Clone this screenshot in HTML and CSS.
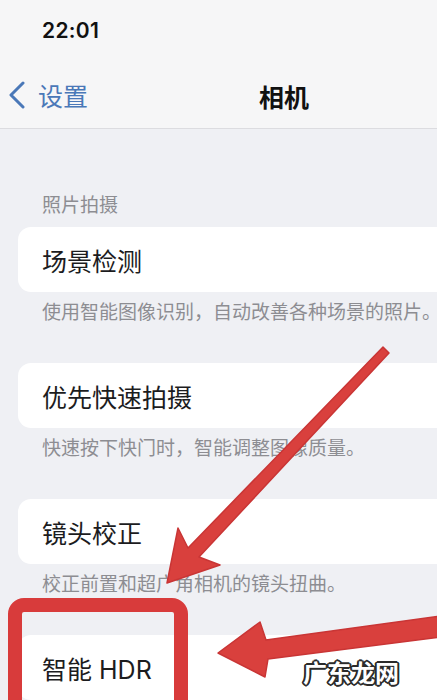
FILE: index.html
```html
<!DOCTYPE html>
<html>
<head>
  <meta charset="utf-8">
  <title>相机</title>
  <link rel="stylesheet" href="styles.css">
</head>
<body>
  <div class="screen">
    <!-- Status bar -->
    <div class="status"><span class="time">22:01</span></div>

    <!-- Navigation bar -->
    <div class="nav">
      <a class="back">
        <svg class="chev" width="18" height="28" viewBox="0 0 18 28"><path d="M15 2 L3 14 L15 26" /></svg>
        <span>设置</span>
      </a>
      <h1 class="title">相机</h1>
    </div>

    <!-- Settings list -->
    <div class="list">
      <div class="section-head">照片拍摄</div>
      <div class="item">
        <div class="card">场景检测</div>
        <p class="desc">使用智能图像识别，自动改善各种场景的照片。</p>
      </div>
      <div class="item">
        <div class="card">优先快速拍摄</div>
        <p class="desc">快速按下快门时，智能调整图像质量。</p>
      </div>
      <div class="item">
        <div class="card">镜头校正</div>
        <p class="desc">校正前置和超广角相机的镜头扭曲。</p>
      </div>
      <div class="item">
        <div class="card">智能 HDR</div>
      </div>
    </div>

    <!-- Red annotation marks drawn over the screenshot -->
    <svg class="marks" width="437" height="700" viewBox="0 0 437 700">
      <rect class="box" x="15" y="605" width="166" height="130" rx="9" />
      <polygon class="arrow" points="383,347 389,353 199,557 220,565 167,583 178,528 188,548" />
      <polygon class="arrow" points="440,616 440,637 268,659 265,677 218,653 260,622 266,640" />
    </svg>
    <div class="watermark">广东龙网</div>
  </div>
</body>
</html>
```

FILE: styles.css
```css
/* Page basics */
body { margin: 0; font-family: Inter, "Noto Sans CJK SC", sans-serif; background: #eff0f4; }
.screen { position: relative; width: 437px; height: 700px; overflow: hidden; }

/* Status and navigation bars */
.status { height: 60px; background: #f6f6f7; box-sizing: border-box; padding: 20px 0 0 42px; }
.time { font-size: 21px; font-weight: 600; line-height: 22px; color: #111; letter-spacing: 0.3px; }
.nav { height: 68px; background: #f6f6f7; border-bottom: 1px solid #dcdce0; display: flex; align-items: center; }
.back { display: flex; align-items: center; color: #4a78b8; font-size: 25px; margin-top: 2px; }
.chev { margin: 0 12px 0 8px; }
.chev path { fill: none; stroke: #4a78b8; stroke-width: 3; stroke-linecap: round; stroke-linejoin: round; }
.title { margin: 4px 0 0 171px; font-size: 25px; font-weight: 700; color: #111; }

/* List */
.list { padding-top: 66px; }
.section-head { padding-left: 42px; font-size: 19px; line-height: 22px; color: #8d8d92; margin-bottom: 10px; }
.card { height: 65px; margin: 0 -20px 0 18px; padding-left: 24px; background: #fff; border-radius: 13px; display: flex; align-items: center; font-size: 25px; color: #1c1c1e; }
.desc { margin: 0; padding: 10px 0 0 42px; height: 61px; font-size: 19px; line-height: 22px; color: #8d8d92; white-space: nowrap; }

/* Annotations */
.marks { position: absolute; top: 0; left: 0; }
.box { fill: none; stroke: #d83b3b; stroke-width: 14; }
.arrow { fill: #d9403d; stroke: #c93535; stroke-width: 1.5; stroke-linejoin: round; }
.watermark {
  position: absolute; left: 303px; top: 654px;
  font-family: "Noto Sans CJK SC", sans-serif; font-size: 24px; font-weight: 700; color: #fff;
  text-shadow: 2px 0 0 #2b2b2b, -2px 0 0 #2b2b2b, 0 2px 0 #2b2b2b, 0 -2px 0 #2b2b2b,
    1.4px 1.4px 0 #2b2b2b, -1.4px 1.4px 0 #2b2b2b, 1.4px -1.4px 0 #2b2b2b, -1.4px -1.4px 0 #2b2b2b;
}
```
